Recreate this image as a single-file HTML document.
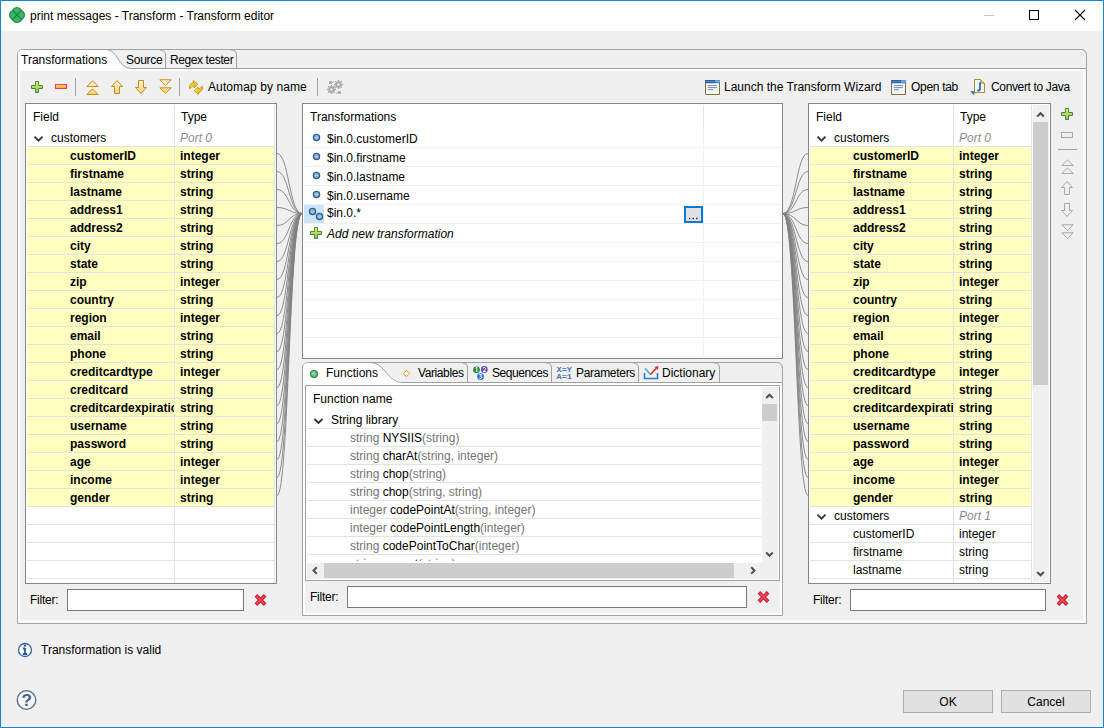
<!DOCTYPE html><html><head><meta charset="utf-8"><style>
html,body{margin:0;padding:0;}
body{width:1104px;height:728px;overflow:hidden;position:relative;background:#f0f0f0;font-family:'Liberation Sans', sans-serif;font-size:12px;color:#000;}
.t{position:absolute;white-space:pre;font-size:12px;line-height:14px;}
.b{font-weight:bold;}
.i{font-style:italic;}
.g{color:#747474;}
svg{position:absolute;left:0;top:0;overflow:visible;}
</style></head><body>
<div style="position:absolute;left:0px;top:0px;width:1104px;height:31px;background:#fff"></div>
<svg width="1104" height="728" style=""><defs><linearGradient id="gp" x1="0" y1="0" x2="0" y2="1"><stop offset="0" stop-color="#eef060"/><stop offset="1" stop-color="#8fc050"/></linearGradient><linearGradient id="gm" x1="0" y1="0" x2="0" y2="1"><stop offset="0" stop-color="#ffe860"/><stop offset="1" stop-color="#f8a040"/></linearGradient><linearGradient id="ga" x1="0" y1="0" x2="0" y2="1"><stop offset="0" stop-color="#fff8e0"/><stop offset="1" stop-color="#f8d070"/></linearGradient><linearGradient id="gg" x1="0" y1="0" x2="1" y2="1"><stop offset="0" stop-color="#fff4b0"/><stop offset="0.5" stop-color="#f4c830"/><stop offset="1" stop-color="#e0a818"/></linearGradient></defs><rect x="0.5" y="0.5" width="1103" height="727" fill="none" stroke="#1883d7"/><g transform="translate(9,7)"><circle cx="8" cy="5.3" r="5.3" fill="#178a3a"/><circle cx="8" cy="10.7" r="5.3" fill="#178a3a"/><circle cx="5.3" cy="8" r="5.3" fill="#178a3a"/><circle cx="10.7" cy="8" r="5.3" fill="#178a3a"/><circle cx="8" cy="5.3" r="4.3" fill="#3cb566"/><circle cx="8" cy="10.7" r="4.3" fill="#3cb566"/><circle cx="5.3" cy="8" r="4.3" fill="#3cb566"/><circle cx="10.7" cy="8" r="4.3" fill="#3cb566"/><path d="M3,3 L13,13 M13,3 L3,13" stroke="#1a843c" stroke-width="1.1"/></g><path d="M984,15.5 H994" stroke="#c8c8c8"/><rect x="1029.5" y="10.5" width="9" height="9" fill="none" stroke="#000"/><path d="M1075,10 L1085,20 M1085,10 L1075,20" stroke="#000" stroke-width="1.1"/></svg>
<div class="t " style="left:30px;top:9px;">print messages - Transform - Transform editor</div>
<svg width="1104" height="728" style=""><path d="M17.5,623.5 V55.5 Q17.5,49.5 23.5,49.5 H1080.5 Q1086.5,49.5 1086.5,55.5 V623.5 Z" fill="#f0f0f0" stroke="#a0a0a0"/><path d="M18,69 V54.5 Q18,50 22.5,50 H106 C118,50 118,68 131,68 V71 H18 Z" fill="#fff"/><path d="M106,49.5 C118,49.5 118,68.5 131,68.5" fill="none" stroke="#a0a0a0"/><path d="M131,68.5 H1086" stroke="#a0a0a0"/><path d="M19,70 H1084.5 V621.5 H19 Z" fill="none" stroke="#fff" stroke-width="2"/><path d="M165.5,68 V55 Q165.5,50 160,50" fill="none" stroke="#a0a0a0"/><path d="M236.5,68 V55 Q236.5,50 231,50" fill="none" stroke="#a0a0a0"/></svg>
<div class="t " style="left:21px;top:53px;">Transformations</div>
<div class="t " style="left:126px;top:53px;letter-spacing:-0.25px">Source</div>
<div class="t " style="left:170px;top:53px;letter-spacing:-0.4px">Regex tester</div>
<svg width="1104" height="728" style=""><g transform="translate(31,81)"><path d="M4.5,0.5 H7.5 V4.5 H11.5 V7.5 H7.5 V11.5 H4.5 V7.5 H0.5 V4.5 H4.5 Z" fill="url(#gp)" stroke="#3a8a48"/></g><rect x="55.5" y="84.5" width="11" height="4" fill="url(#gm)" stroke="#f03a55"/><path d="M75.5,78 V96" stroke="#a0a0a0"/><path d="M179.5,78 V96" stroke="#a0a0a0"/><path d="M317.5,78 V96" stroke="#a0a0a0"/><g transform="translate(86,80)"><path d="M6.5,0.8 L12.2,6.5 H0.8 Z M6.5,8.8 L12.2,14.5 H0.8 Z" fill="url(#ga)" stroke="#c98a1a" stroke-linejoin="round"/></g><g transform="translate(111,80)"><path d="M6,0.5 L11.5,6.5 H8.5 V13.5 H3.5 V6.5 H0.5 Z" fill="url(#ga)" stroke="#c98a1a" stroke-linejoin="round"/></g><g transform="translate(135,80)"><path d="M3.5,0.5 H8.5 V7.5 H11.5 L6,13.5 L0.5,7.5 H3.5 Z" fill="url(#ga)" stroke="#c98a1a" stroke-linejoin="round"/></g><g transform="translate(159,79)"><path d="M0.8,0.8 H12.2 L6.5,6.5 Z M0.8,8.8 H12.2 L6.5,14.5 Z" fill="url(#ga)" stroke="#c98a1a" stroke-linejoin="round"/></g><g transform="translate(189,80)" fill="url(#gg)" stroke="#c89410" stroke-width="0.9" stroke-linejoin="round"><path d="M0.6,9 V5.5 L3,2.8 H4.6 V0.6 L8.8,4.3 L5,8 V6.2 H3.2 Z"/><path d="M13.4,6 V9.5 L11,12.2 H9.4 V14.4 L5.2,10.7 L9,7 V8.8 H10.8 Z"/></g><path d="M336.06,88.87 L336.06,90.13 L334.69,90.33 L334.35,91.17 L335.17,92.27 L334.27,93.17 L333.17,92.35 L332.33,92.69 L332.13,94.06 L330.87,94.06 L330.67,92.69 L329.83,92.35 L328.73,93.17 L327.83,92.27 L328.65,91.17 L328.31,90.33 L326.94,90.13 L326.94,88.87 L328.31,88.67 L328.65,87.83 L327.83,86.73 L328.73,85.83 L329.83,86.65 L330.67,86.31 L330.87,84.94 L332.13,84.94 L332.33,86.31 L333.17,86.65 L334.27,85.83 L335.17,86.73 L334.35,87.83 L334.69,88.67 Z M332.8,89.5 A1.3,1.3 0 1 0 330.2,89.5 A1.3,1.3 0 1 0 332.8,89.5 Z" fill="#a9a9a9" fill-rule="evenodd"/><path d="M343.06,83.87 L343.06,85.13 L341.69,85.33 L341.35,86.17 L342.17,87.27 L341.27,88.17 L340.17,87.35 L339.33,87.69 L339.13,89.06 L337.87,89.06 L337.67,87.69 L336.83,87.35 L335.73,88.17 L334.83,87.27 L335.65,86.17 L335.31,85.33 L333.94,85.13 L333.94,83.87 L335.31,83.67 L335.65,82.83 L334.83,81.73 L335.73,80.83 L336.83,81.65 L337.67,81.31 L337.87,79.94 L339.13,79.94 L339.33,81.31 L340.17,81.65 L341.27,80.83 L342.17,81.73 L341.35,82.83 L341.69,83.67 Z M339.8,84.5 A1.3,1.3 0 1 0 337.2,84.5 A1.3,1.3 0 1 0 339.8,84.5 Z" fill="#a9a9a9" fill-rule="evenodd"/><rect x="329" y="81" width="3" height="3" fill="#b0b0b0"/><path d="M332,83 L334,81" stroke="#b0b0b0"/><rect x="338" y="91" width="3" height="3" fill="#b0b0b0"/><path d="M336,94 L338,92" stroke="#b0b0b0"/><g transform="translate(705,80)"><rect x="0" y="0" width="15" height="15" fill="#eef8fb"/><path d="M0.5,3 V14.5 H14.5 V3" fill="none" stroke="#8a7038"/><rect x="0" y="0" width="15" height="3.2" fill="#2c5c9c"/><rect x="0.5" y="1" width="9" height="1" fill="#4a8ad0"/><rect x="10" y="0.3" width="5" height="2.2" fill="#6cb2ea"/><path d="M3,5.6 H12 M3,7.6 H12 M3,9.6 H8" stroke="#7a88c0"/></g><g transform="translate(891,80)"><rect x="0" y="0" width="15" height="15" fill="#eef8fb"/><path d="M0.5,3 V14.5 H14.5 V3" fill="none" stroke="#8a7038"/><rect x="0" y="0" width="15" height="3.2" fill="#2c5c9c"/><rect x="0.5" y="1" width="9" height="1" fill="#4a8ad0"/><rect x="10" y="0.3" width="5" height="2.2" fill="#6cb2ea"/><path d="M3,5.6 H12 M3,7.6 H12 M3,9.6 H8" stroke="#7a88c0"/></g><g transform="translate(970,79)"><path d="M4.5,0.5 H10.5 L14.5,4.5 V13.5 H4.5 Z" fill="#f2f5fb" stroke="#b08a30"/><path d="M10.5,0.5 L14.5,4.5 H10.5 Z" fill="#e8c070" stroke="#b08a30" stroke-width="0.6"/><path d="M10,3.3 V9.8 Q10,11.6 8.2,11.6 H7.3" fill="none" stroke="#2a64a8" stroke-width="1.7"/><path d="M0.2,12.3 H4.5 L4.3,16.3 Z" fill="#2a64a8"/></g></svg>
<div class="t " style="left:208px;top:80px;letter-spacing:0.1px">Automap by name</div>
<div class="t " style="left:724px;top:80px;">Launch the Transform Wizard</div>
<div class="t " style="left:911px;top:80px;letter-spacing:-0.3px">Open tab</div>
<div class="t " style="left:991px;top:80px;letter-spacing:-0.35px">Convert to Java</div>
<div style="position:absolute;left:25px;top:103px;width:252px;height:481px;background:#fff;box-sizing:border-box;border:1px solid #828790"></div>
<div style="position:absolute;left:27px;top:147px;width:248px;height:17px;background:#ffffc0"></div>
<div style="position:absolute;left:27px;top:165px;width:248px;height:17px;background:#ffffc0"></div>
<div style="position:absolute;left:27px;top:183px;width:248px;height:17px;background:#ffffc0"></div>
<div style="position:absolute;left:27px;top:201px;width:248px;height:17px;background:#ffffc0"></div>
<div style="position:absolute;left:27px;top:219px;width:248px;height:17px;background:#ffffc0"></div>
<div style="position:absolute;left:27px;top:237px;width:248px;height:17px;background:#ffffc0"></div>
<div style="position:absolute;left:27px;top:255px;width:248px;height:17px;background:#ffffc0"></div>
<div style="position:absolute;left:27px;top:273px;width:248px;height:17px;background:#ffffc0"></div>
<div style="position:absolute;left:27px;top:291px;width:248px;height:17px;background:#ffffc0"></div>
<div style="position:absolute;left:27px;top:309px;width:248px;height:17px;background:#ffffc0"></div>
<div style="position:absolute;left:27px;top:327px;width:248px;height:17px;background:#ffffc0"></div>
<div style="position:absolute;left:27px;top:345px;width:248px;height:17px;background:#ffffc0"></div>
<div style="position:absolute;left:27px;top:363px;width:248px;height:17px;background:#ffffc0"></div>
<div style="position:absolute;left:27px;top:381px;width:248px;height:17px;background:#ffffc0"></div>
<div style="position:absolute;left:27px;top:399px;width:248px;height:17px;background:#ffffc0"></div>
<div style="position:absolute;left:27px;top:417px;width:248px;height:17px;background:#ffffc0"></div>
<div style="position:absolute;left:27px;top:435px;width:248px;height:17px;background:#ffffc0"></div>
<div style="position:absolute;left:27px;top:453px;width:248px;height:17px;background:#ffffc0"></div>
<div style="position:absolute;left:27px;top:471px;width:248px;height:17px;background:#ffffc0"></div>
<div style="position:absolute;left:27px;top:489px;width:248px;height:17px;background:#ffffc0"></div>
<svg width="1104" height="728" style=""><path d="M27,146.5 H275" stroke="#e3e3e3"/><path d="M27,164.5 H275" stroke="#e3e3e3"/><path d="M27,182.5 H275" stroke="#e3e3e3"/><path d="M27,200.5 H275" stroke="#e3e3e3"/><path d="M27,218.5 H275" stroke="#e3e3e3"/><path d="M27,236.5 H275" stroke="#e3e3e3"/><path d="M27,254.5 H275" stroke="#e3e3e3"/><path d="M27,272.5 H275" stroke="#e3e3e3"/><path d="M27,290.5 H275" stroke="#e3e3e3"/><path d="M27,308.5 H275" stroke="#e3e3e3"/><path d="M27,326.5 H275" stroke="#e3e3e3"/><path d="M27,344.5 H275" stroke="#e3e3e3"/><path d="M27,362.5 H275" stroke="#e3e3e3"/><path d="M27,380.5 H275" stroke="#e3e3e3"/><path d="M27,398.5 H275" stroke="#e3e3e3"/><path d="M27,416.5 H275" stroke="#e3e3e3"/><path d="M27,434.5 H275" stroke="#e3e3e3"/><path d="M27,452.5 H275" stroke="#e3e3e3"/><path d="M27,470.5 H275" stroke="#e3e3e3"/><path d="M27,488.5 H275" stroke="#e3e3e3"/><path d="M27,506.5 H275" stroke="#e3e3e3"/><path d="M27,524.5 H275" stroke="#e3e3e3"/><path d="M27,542.5 H275" stroke="#e3e3e3"/><path d="M27,560.5 H275" stroke="#e3e3e3"/><path d="M27,578.5 H275" stroke="#e3e3e3"/><path d="M174.5,105 V583" stroke="#e3e3e3"/><path d="M274.5,105 V583" stroke="#e3e3e3"/><rect x="25.5" y="103.5" width="251" height="480" fill="none" stroke="#828790"/></svg>
<div class="t " style="left:33px;top:110px;">Field</div>
<div class="t " style="left:181px;top:110px;">Type</div>
<div style="position:absolute;left:26px;top:104px;width:249px;height:479px;overflow:hidden">
<svg width="20" height="20" style="left:7px;top:31px;position:absolute"><path d="M1.5,1.7 L5.5,5.7 L9.5,1.7" fill="none" stroke="#383838" stroke-width="1.9"/></svg>
<div class="t" style="left:25px;top:27px">customers</div>
<div class="t i" style="left:154px;top:27px;color:#8c8c8c">Port 0</div>
<div class="t b" style="left:44px;top:45px;width:104px;overflow:hidden">customerID</div>
<div class="t b" style="left:154px;top:45px">integer</div>
<div class="t b" style="left:44px;top:63px;width:104px;overflow:hidden">firstname</div>
<div class="t b" style="left:154px;top:63px">string</div>
<div class="t b" style="left:44px;top:81px;width:104px;overflow:hidden">lastname</div>
<div class="t b" style="left:154px;top:81px">string</div>
<div class="t b" style="left:44px;top:99px;width:104px;overflow:hidden">address1</div>
<div class="t b" style="left:154px;top:99px">string</div>
<div class="t b" style="left:44px;top:117px;width:104px;overflow:hidden">address2</div>
<div class="t b" style="left:154px;top:117px">string</div>
<div class="t b" style="left:44px;top:135px;width:104px;overflow:hidden">city</div>
<div class="t b" style="left:154px;top:135px">string</div>
<div class="t b" style="left:44px;top:153px;width:104px;overflow:hidden">state</div>
<div class="t b" style="left:154px;top:153px">string</div>
<div class="t b" style="left:44px;top:171px;width:104px;overflow:hidden">zip</div>
<div class="t b" style="left:154px;top:171px">integer</div>
<div class="t b" style="left:44px;top:189px;width:104px;overflow:hidden">country</div>
<div class="t b" style="left:154px;top:189px">string</div>
<div class="t b" style="left:44px;top:207px;width:104px;overflow:hidden">region</div>
<div class="t b" style="left:154px;top:207px">integer</div>
<div class="t b" style="left:44px;top:225px;width:104px;overflow:hidden">email</div>
<div class="t b" style="left:154px;top:225px">string</div>
<div class="t b" style="left:44px;top:243px;width:104px;overflow:hidden">phone</div>
<div class="t b" style="left:154px;top:243px">string</div>
<div class="t b" style="left:44px;top:261px;width:104px;overflow:hidden">creditcardtype</div>
<div class="t b" style="left:154px;top:261px">integer</div>
<div class="t b" style="left:44px;top:279px;width:104px;overflow:hidden">creditcard</div>
<div class="t b" style="left:154px;top:279px">string</div>
<div class="t b" style="left:44px;top:297px;width:104px;overflow:hidden">creditcardexpiration</div>
<div class="t b" style="left:154px;top:297px">string</div>
<div class="t b" style="left:44px;top:315px;width:104px;overflow:hidden">username</div>
<div class="t b" style="left:154px;top:315px">string</div>
<div class="t b" style="left:44px;top:333px;width:104px;overflow:hidden">password</div>
<div class="t b" style="left:154px;top:333px">string</div>
<div class="t b" style="left:44px;top:351px;width:104px;overflow:hidden">age</div>
<div class="t b" style="left:154px;top:351px">integer</div>
<div class="t b" style="left:44px;top:369px;width:104px;overflow:hidden">income</div>
<div class="t b" style="left:154px;top:369px">integer</div>
<div class="t b" style="left:44px;top:387px;width:104px;overflow:hidden">gender</div>
<div class="t b" style="left:154px;top:387px">string</div>
</div>
<div style="position:absolute;left:808px;top:103px;width:243px;height:481px;background:#fff;box-sizing:border-box;border:1px solid #828790"></div>
<div style="position:absolute;left:810px;top:147px;width:221px;height:17px;background:#ffffc0"></div>
<div style="position:absolute;left:810px;top:165px;width:221px;height:17px;background:#ffffc0"></div>
<div style="position:absolute;left:810px;top:183px;width:221px;height:17px;background:#ffffc0"></div>
<div style="position:absolute;left:810px;top:201px;width:221px;height:17px;background:#ffffc0"></div>
<div style="position:absolute;left:810px;top:219px;width:221px;height:17px;background:#ffffc0"></div>
<div style="position:absolute;left:810px;top:237px;width:221px;height:17px;background:#ffffc0"></div>
<div style="position:absolute;left:810px;top:255px;width:221px;height:17px;background:#ffffc0"></div>
<div style="position:absolute;left:810px;top:273px;width:221px;height:17px;background:#ffffc0"></div>
<div style="position:absolute;left:810px;top:291px;width:221px;height:17px;background:#ffffc0"></div>
<div style="position:absolute;left:810px;top:309px;width:221px;height:17px;background:#ffffc0"></div>
<div style="position:absolute;left:810px;top:327px;width:221px;height:17px;background:#ffffc0"></div>
<div style="position:absolute;left:810px;top:345px;width:221px;height:17px;background:#ffffc0"></div>
<div style="position:absolute;left:810px;top:363px;width:221px;height:17px;background:#ffffc0"></div>
<div style="position:absolute;left:810px;top:381px;width:221px;height:17px;background:#ffffc0"></div>
<div style="position:absolute;left:810px;top:399px;width:221px;height:17px;background:#ffffc0"></div>
<div style="position:absolute;left:810px;top:417px;width:221px;height:17px;background:#ffffc0"></div>
<div style="position:absolute;left:810px;top:435px;width:221px;height:17px;background:#ffffc0"></div>
<div style="position:absolute;left:810px;top:453px;width:221px;height:17px;background:#ffffc0"></div>
<div style="position:absolute;left:810px;top:471px;width:221px;height:17px;background:#ffffc0"></div>
<div style="position:absolute;left:810px;top:489px;width:221px;height:17px;background:#ffffc0"></div>
<svg width="1104" height="728" style=""><path d="M810,146.5 H1031" stroke="#e3e3e3"/><path d="M810,164.5 H1031" stroke="#e3e3e3"/><path d="M810,182.5 H1031" stroke="#e3e3e3"/><path d="M810,200.5 H1031" stroke="#e3e3e3"/><path d="M810,218.5 H1031" stroke="#e3e3e3"/><path d="M810,236.5 H1031" stroke="#e3e3e3"/><path d="M810,254.5 H1031" stroke="#e3e3e3"/><path d="M810,272.5 H1031" stroke="#e3e3e3"/><path d="M810,290.5 H1031" stroke="#e3e3e3"/><path d="M810,308.5 H1031" stroke="#e3e3e3"/><path d="M810,326.5 H1031" stroke="#e3e3e3"/><path d="M810,344.5 H1031" stroke="#e3e3e3"/><path d="M810,362.5 H1031" stroke="#e3e3e3"/><path d="M810,380.5 H1031" stroke="#e3e3e3"/><path d="M810,398.5 H1031" stroke="#e3e3e3"/><path d="M810,416.5 H1031" stroke="#e3e3e3"/><path d="M810,434.5 H1031" stroke="#e3e3e3"/><path d="M810,452.5 H1031" stroke="#e3e3e3"/><path d="M810,470.5 H1031" stroke="#e3e3e3"/><path d="M810,488.5 H1031" stroke="#e3e3e3"/><path d="M810,506.5 H1031" stroke="#e3e3e3"/><path d="M810,524.5 H1031" stroke="#e3e3e3"/><path d="M810,542.5 H1031" stroke="#e3e3e3"/><path d="M810,560.5 H1031" stroke="#e3e3e3"/><path d="M810,578.5 H1031" stroke="#e3e3e3"/><path d="M953.5,105 V583" stroke="#e3e3e3"/><path d="M1031.5,105 V583" stroke="#e3e3e3"/><rect x="808.5" y="103.5" width="242" height="480" fill="none" stroke="#828790"/></svg>
<div class="t " style="left:816px;top:110px;">Field</div>
<div class="t " style="left:960px;top:110px;">Type</div>
<div style="position:absolute;left:809px;top:104px;width:222px;height:479px;overflow:hidden">
<svg width="20" height="20" style="left:7px;top:31px;position:absolute"><path d="M1.5,1.7 L5.5,5.7 L9.5,1.7" fill="none" stroke="#383838" stroke-width="1.9"/></svg>
<div class="t" style="left:25px;top:27px">customers</div>
<div class="t i" style="left:150px;top:27px;color:#8c8c8c">Port 0</div>
<div class="t b" style="left:44px;top:45px;width:100px;overflow:hidden">customerID</div>
<div class="t b" style="left:150px;top:45px">integer</div>
<div class="t b" style="left:44px;top:63px;width:100px;overflow:hidden">firstname</div>
<div class="t b" style="left:150px;top:63px">string</div>
<div class="t b" style="left:44px;top:81px;width:100px;overflow:hidden">lastname</div>
<div class="t b" style="left:150px;top:81px">string</div>
<div class="t b" style="left:44px;top:99px;width:100px;overflow:hidden">address1</div>
<div class="t b" style="left:150px;top:99px">string</div>
<div class="t b" style="left:44px;top:117px;width:100px;overflow:hidden">address2</div>
<div class="t b" style="left:150px;top:117px">string</div>
<div class="t b" style="left:44px;top:135px;width:100px;overflow:hidden">city</div>
<div class="t b" style="left:150px;top:135px">string</div>
<div class="t b" style="left:44px;top:153px;width:100px;overflow:hidden">state</div>
<div class="t b" style="left:150px;top:153px">string</div>
<div class="t b" style="left:44px;top:171px;width:100px;overflow:hidden">zip</div>
<div class="t b" style="left:150px;top:171px">integer</div>
<div class="t b" style="left:44px;top:189px;width:100px;overflow:hidden">country</div>
<div class="t b" style="left:150px;top:189px">string</div>
<div class="t b" style="left:44px;top:207px;width:100px;overflow:hidden">region</div>
<div class="t b" style="left:150px;top:207px">integer</div>
<div class="t b" style="left:44px;top:225px;width:100px;overflow:hidden">email</div>
<div class="t b" style="left:150px;top:225px">string</div>
<div class="t b" style="left:44px;top:243px;width:100px;overflow:hidden">phone</div>
<div class="t b" style="left:150px;top:243px">string</div>
<div class="t b" style="left:44px;top:261px;width:100px;overflow:hidden">creditcardtype</div>
<div class="t b" style="left:150px;top:261px">integer</div>
<div class="t b" style="left:44px;top:279px;width:100px;overflow:hidden">creditcard</div>
<div class="t b" style="left:150px;top:279px">string</div>
<div class="t b" style="left:44px;top:297px;width:100px;overflow:hidden">creditcardexpiration</div>
<div class="t b" style="left:150px;top:297px">string</div>
<div class="t b" style="left:44px;top:315px;width:100px;overflow:hidden">username</div>
<div class="t b" style="left:150px;top:315px">string</div>
<div class="t b" style="left:44px;top:333px;width:100px;overflow:hidden">password</div>
<div class="t b" style="left:150px;top:333px">string</div>
<div class="t b" style="left:44px;top:351px;width:100px;overflow:hidden">age</div>
<div class="t b" style="left:150px;top:351px">integer</div>
<div class="t b" style="left:44px;top:369px;width:100px;overflow:hidden">income</div>
<div class="t b" style="left:150px;top:369px">integer</div>
<div class="t b" style="left:44px;top:387px;width:100px;overflow:hidden">gender</div>
<div class="t b" style="left:150px;top:387px">string</div>
<svg width="20" height="20" style="left:7px;top:409px;position:absolute"><path d="M1.5,1.7 L5.5,5.7 L9.5,1.7" fill="none" stroke="#383838" stroke-width="1.9"/></svg>
<div class="t" style="left:25px;top:405px">customers</div>
<div class="t i" style="left:150px;top:405px;color:#8c8c8c">Port 1</div>
<div class="t " style="left:44px;top:423px;width:100px;overflow:hidden">customerID</div>
<div class="t " style="left:150px;top:423px">integer</div>
<div class="t " style="left:44px;top:441px;width:100px;overflow:hidden">firstname</div>
<div class="t " style="left:150px;top:441px">string</div>
<div class="t " style="left:44px;top:459px;width:100px;overflow:hidden">lastname</div>
<div class="t " style="left:150px;top:459px">string</div>
<div class="t " style="left:44px;top:477px;width:100px;overflow:hidden">address1</div>
<div class="t " style="left:150px;top:477px">string</div>
</div>
<div style="position:absolute;left:1033px;top:105px;width:16px;height:477px;background:#f0f0f0"></div>
<div style="position:absolute;left:1033px;top:122px;width:15px;height:263px;background:#cdcdcd"></div>
<svg width="1104" height="728" style=""><path d="M1037.2,116.5 L1040.5,113.2 L1043.8,116.5" fill="none" stroke="#505050" stroke-width="2"/><path d="M1037.2,572 L1040.5,575.3 L1043.8,572" fill="none" stroke="#505050" stroke-width="2"/></svg>
<svg width="1104" height="728" style=""><g transform="translate(1061,108)"><path d="M4.5,0.5 H7.5 V4.5 H11.5 V7.5 H7.5 V11.5 H4.5 V7.5 H0.5 V4.5 H4.5 Z" fill="url(#gp)" stroke="#3a8a48"/></g><rect x="1061.5" y="132.5" width="11" height="5" fill="none" stroke="#a8a8a8"/><path d="M1058,149.5 H1077" stroke="#a0a0a0"/><g transform="translate(1061,159)"><path d="M6.5,0.8 L12.2,6.5 H0.8 Z M6.5,8.8 L12.2,14.5 H0.8 Z" fill="#f0f0f0" stroke="#a8a8a8" stroke-linejoin="round"/></g><g transform="translate(1061,181)"><path d="M6,0.5 L11.5,6.5 H8.5 V13.5 H3.5 V6.5 H0.5 Z" fill="#f0f0f0" stroke="#a8a8a8" stroke-linejoin="round"/></g><g transform="translate(1061,203)"><path d="M3.5,0.5 H8.5 V7.5 H11.5 L6,13.5 L0.5,7.5 H3.5 Z" fill="#f0f0f0" stroke="#a8a8a8" stroke-linejoin="round"/></g><g transform="translate(1061,224)"><path d="M0.8,0.8 H12.2 L6.5,6.5 Z M0.8,8.8 H12.2 L6.5,14.5 Z" fill="#f0f0f0" stroke="#a8a8a8" stroke-linejoin="round"/></g></svg>
<div style="position:absolute;left:302px;top:103px;width:481px;height:256px;background:#fff;box-sizing:border-box;border:1px solid #828790"></div>
<svg width="1104" height="728" style=""><path d="M304,147.5 H781" stroke="#f0f0f0"/><path d="M304,166.5 H781" stroke="#f0f0f0"/><path d="M304,185.5 H781" stroke="#f0f0f0"/><path d="M304,204.5 H781" stroke="#f0f0f0"/><path d="M304,223.5 H781" stroke="#f0f0f0"/><path d="M304,242.5 H781" stroke="#f0f0f0"/><path d="M304,261.5 H781" stroke="#f0f0f0"/><path d="M304,280.5 H781" stroke="#f0f0f0"/><path d="M304,299.5 H781" stroke="#f0f0f0"/><path d="M304,318.5 H781" stroke="#f0f0f0"/><path d="M304,337.5 H781" stroke="#f0f0f0"/><path d="M304,356.5 H781" stroke="#f0f0f0"/><path d="M703.5,105 V128" stroke="#e5e5e5"/><path d="M703.5,128 V357" stroke="#eaf2fa"/><rect x="304" y="205" width="20" height="18" fill="#cce4f7"/><circle cx="316.5" cy="137.5" r="3.1" fill="#8cb6dc" stroke="#2f5f8c" stroke-width="1.3"/><path d="M315.0,137.5 H318.0" stroke="#b8d4ec" stroke-width="0.8"/><circle cx="316.5" cy="156.5" r="3.1" fill="#8cb6dc" stroke="#2f5f8c" stroke-width="1.3"/><path d="M315.0,156.5 H318.0" stroke="#b8d4ec" stroke-width="0.8"/><circle cx="316.5" cy="175.5" r="3.1" fill="#8cb6dc" stroke="#2f5f8c" stroke-width="1.3"/><path d="M315.0,175.5 H318.0" stroke="#b8d4ec" stroke-width="0.8"/><circle cx="316.5" cy="194.5" r="3.1" fill="#8cb6dc" stroke="#2f5f8c" stroke-width="1.3"/><path d="M315.0,194.5 H318.0" stroke="#b8d4ec" stroke-width="0.8"/><circle cx="312.5" cy="211.5" r="3.1" fill="#8cb6dc" stroke="#2f5f8c" stroke-width="1.3"/><path d="M311.0,211.5 H314.0" stroke="#b8d4ec" stroke-width="0.8"/><circle cx="319.5" cy="216.5" r="3.1" fill="#8cb6dc" stroke="#2f5f8c" stroke-width="1.3"/><path d="M318.0,216.5 H321.0" stroke="#b8d4ec" stroke-width="0.8"/><g transform="translate(310,227)"><path d="M4.5,0.5 H7.5 V4.5 H11.5 V7.5 H7.5 V11.5 H4.5 V7.5 H0.5 V4.5 H4.5 Z" fill="url(#gp)" stroke="#3a8a48"/></g><rect x="685" y="207" width="17" height="15" fill="#e1e1e1" stroke="#0078d7" stroke-width="2"/><path d="M689,218.5 h1.2 M692.6,218.5 h1.2 M696.2,218.5 h1.2" stroke="#000" stroke-width="1.5"/><rect x="302.5" y="103.5" width="480" height="255" fill="none" stroke="#828790"/></svg>
<div class="t " style="left:310px;top:110px;">Transformations</div>
<div class="t " style="left:327px;top:132px;">$in.0.customerID</div>
<div class="t " style="left:327px;top:151px;">$in.0.firstname</div>
<div class="t " style="left:327px;top:170px;">$in.0.lastname</div>
<div class="t " style="left:327px;top:189px;">$in.0.username</div>
<div class="t " style="left:327px;top:206px;">$in.0.*</div>
<div class="t i" style="left:327px;top:227px;">Add new transformation</div>
<svg width="1104" height="728" style=""><path d="M302.5,615.5 V368.5 Q302.5,362.5 308.5,362.5 H776.5 Q782.5,362.5 782.5,368.5 V615.5 Z" fill="#f0f0f0" stroke="#a0a0a0"/><path d="M303,382 V367.5 Q303,363 307.5,363 H371 C384,363 388,381 402,381 V384 H303 Z" fill="#fff"/><path d="M371,362.5 C384,362.5 388,382.5 402,382.5" fill="none" stroke="#a0a0a0"/><path d="M402,382.5 H782" stroke="#a0a0a0"/><path d="M304,384 H781 V614 H304 Z" fill="none" stroke="#fff" stroke-width="2"/><path d="M467.5,382 V368 Q467.5,363 462.5,363" fill="none" stroke="#a0a0a0"/><path d="M551.5,382 V368 Q551.5,363 546.5,363" fill="none" stroke="#a0a0a0"/><path d="M638.5,382 V368 Q638.5,363 633.5,363" fill="none" stroke="#a0a0a0"/><path d="M719.5,382 V368 Q719.5,363 714.5,363" fill="none" stroke="#a0a0a0"/><defs><radialGradient id="gd" cx="0.45" cy="0.45" r="0.6"><stop offset="0" stop-color="#a8dcb0"/><stop offset="1" stop-color="#4aa060"/></radialGradient></defs><circle cx="314" cy="374" r="3.5" fill="url(#gd)" stroke="#2a8a47" stroke-width="1.1"/><path d="M406.5,370.3 L409.7,373.5 L406.5,376.7 L403.3,373.5 Z" fill="#fffbe8" stroke="#d4a020" stroke-width="1"/><circle cx="476.5" cy="369.8" r="3.4" fill="#2a8a40"/><circle cx="484.3" cy="369.5" r="3.4" fill="#6a50b0"/><circle cx="480.5" cy="376.6" r="3.4" fill="#2a78d0"/><path d="M475.7,368 L476.8,367.3 V372" stroke="#fff" stroke-width="1" fill="none"/><path d="M483,368 Q484.5,366.8 485.6,368.2 Q485.6,369.2 483.2,371.5 H485.8" stroke="#fff" stroke-width="0.9" fill="none"/><path d="M479.2,374.6 H481.6 L480.3,376.3 Q482,376.5 481.7,377.8 Q481,379 479.2,378.4" stroke="#fff" stroke-width="0.9" fill="none"/><text x="556.5" y="371.8" textLength="15.5" lengthAdjust="spacingAndGlyphs" font-family="Liberation Mono" font-size="7.5" font-weight="bold" fill="#4a7ab8">X=Y</text><text x="556.5" y="379" textLength="15.5" lengthAdjust="spacingAndGlyphs" font-family="Liberation Mono" font-size="7.5" font-weight="bold" fill="#4a7ab8">A=1</text><path d="M644.5,373 V378.5 H657.5 V373" fill="none" stroke="#2f78d0" stroke-width="1.6"/><path d="M645,368.5 L650.5,374.5" fill="none" stroke="#48aee8" stroke-width="1.6"/><path d="M650.5,374.5 L656,368.5" fill="none" stroke="#d02a2a" stroke-width="1.6"/><path d="M654.5,367 L658.5,366 L657.8,370 Z" fill="#d02a2a"/></svg>
<div class="t " style="left:326px;top:366px;">Functions</div>
<div class="t " style="left:418px;top:366px;letter-spacing:-0.4px">Variables</div>
<div class="t " style="left:492px;top:366px;letter-spacing:-0.45px">Sequences</div>
<div class="t " style="left:576px;top:366px;letter-spacing:-0.3px">Parameters</div>
<div class="t " style="left:662px;top:366px;">Dictionary</div>
<div style="position:absolute;left:305px;top:385px;width:475px;height:196px;background:#fff;box-sizing:border-box;border:1px solid #a2a4ac"></div>
<svg width="1104" height="728" style=""><path d="M307,428.5 H761" stroke="#e3e3e3"/><path d="M307,446.5 H761" stroke="#e3e3e3"/><path d="M307,464.5 H761" stroke="#e3e3e3"/><path d="M307,482.5 H761" stroke="#e3e3e3"/><path d="M307,500.5 H761" stroke="#e3e3e3"/><path d="M307,518.5 H761" stroke="#e3e3e3"/><path d="M307,536.5 H761" stroke="#e3e3e3"/><path d="M307,554.5 H761" stroke="#e3e3e3"/><path d="M314.5,419.0 L318.5,423.0 L322.5,419.0" fill="none" stroke="#383838" stroke-width="1.9"/><rect x="305.5" y="385.5" width="474" height="195" fill="none" stroke="#a2a4ac"/></svg>
<div class="t " style="left:313px;top:392px;">Function name</div>
<div class="t " style="left:331px;top:413px;">String library</div>
<div style="position:absolute;left:306px;top:386px;width:456px;height:175px;overflow:hidden">
<div class="t" style="left:44px;top:45px"><span class="g">string </span>NYSIIS<span class="g">(string)</span></div>
<div class="t" style="left:44px;top:63px"><span class="g">string </span>charAt<span class="g">(string, integer)</span></div>
<div class="t" style="left:44px;top:81px"><span class="g">string </span>chop<span class="g">(string)</span></div>
<div class="t" style="left:44px;top:99px"><span class="g">string </span>chop<span class="g">(string, string)</span></div>
<div class="t" style="left:44px;top:117px"><span class="g">integer </span>codePointAt<span class="g">(string, integer)</span></div>
<div class="t" style="left:44px;top:135px"><span class="g">integer </span>codePointLength<span class="g">(integer)</span></div>
<div class="t" style="left:44px;top:153px"><span class="g">string </span>codePointToChar<span class="g">(integer)</span></div>
<div class="t" style="left:44px;top:171px"><span class="g">string </span>concat<span class="g">(string)</span></div>
</div>
<div style="position:absolute;left:762px;top:387px;width:16px;height:192px;background:#f0f0f0"></div>
<div style="position:absolute;left:762px;top:404px;width:15px;height:17px;background:#cdcdcd"></div>
<div style="position:absolute;left:307px;top:563px;width:471px;height:16px;background:#f0f0f0"></div>
<div style="position:absolute;left:324px;top:563px;width:410px;height:15px;background:#cdcdcd"></div>
<svg width="1104" height="728" style=""><path d="M766.2,398 L769.5,394.7 L772.8,398" fill="none" stroke="#505050" stroke-width="2"/><path d="M766.2,552.5 L769.5,555.8 L772.8,552.5" fill="none" stroke="#505050" stroke-width="2"/><path d="M316.8,567.2 L313.5,570.5 L316.8,573.8" fill="none" stroke="#505050" stroke-width="2"/><path d="M751.2,567.2 L754.5,570.5 L751.2,573.8" fill="none" stroke="#505050" stroke-width="2"/></svg>
<div class="t " style="left:30px;top:593px;letter-spacing:-0.25px">Filter:</div>
<div style="position:absolute;left:67px;top:589px;width:177px;height:22px;background:#fff;box-sizing:border-box;border:1px solid #7a7a7a"></div>
<div class="t " style="left:310px;top:590px;letter-spacing:-0.25px">Filter:</div>
<div style="position:absolute;left:347px;top:586px;width:400px;height:22px;background:#fff;box-sizing:border-box;border:1px solid #7a7a7a"></div>
<div class="t " style="left:813px;top:593px;letter-spacing:-0.25px">Filter:</div>
<div style="position:absolute;left:850px;top:589px;width:196px;height:22px;background:#fff;box-sizing:border-box;border:1px solid #7a7a7a"></div>
<svg width="1104" height="728" style=""><g transform="translate(254,593.5)"><path d="M1.9,1.9 L11.1,11.1 M11.1,1.9 L1.9,11.1" stroke="#c8182a" stroke-width="3.7"/><path d="M2.6,2.6 L10.4,10.4 M10.4,2.6 L2.6,10.4" stroke="#f0485a" stroke-width="2.0"/></g><g transform="translate(757,590.5)"><path d="M1.9,1.9 L11.1,11.1 M11.1,1.9 L1.9,11.1" stroke="#c8182a" stroke-width="3.7"/><path d="M2.6,2.6 L10.4,10.4 M10.4,2.6 L2.6,10.4" stroke="#f0485a" stroke-width="2.0"/></g><g transform="translate(1056,593.5)"><path d="M1.9,1.9 L11.1,11.1 M11.1,1.9 L1.9,11.1" stroke="#c8182a" stroke-width="3.7"/><path d="M2.6,2.6 L10.4,10.4 M10.4,2.6 L2.6,10.4" stroke="#f0485a" stroke-width="2.0"/></g></svg>
<svg width="1104" height="728" style=""><path d="M277,153.5 C289,153.5 289,213.5 302,213.5" fill="none" stroke="#808080" stroke-width="0.9"/><path d="M783,213.5 C796,213.5 796,153.5 808,153.5" fill="none" stroke="#808080" stroke-width="0.9"/><path d="M277,171.5 C289,171.5 289,213.5 302,213.5" fill="none" stroke="#808080" stroke-width="0.9"/><path d="M783,213.5 C796,213.5 796,171.5 808,171.5" fill="none" stroke="#808080" stroke-width="0.9"/><path d="M277,189.5 C289,189.5 289,213.5 302,213.5" fill="none" stroke="#808080" stroke-width="0.9"/><path d="M783,213.5 C796,213.5 796,189.5 808,189.5" fill="none" stroke="#808080" stroke-width="0.9"/><path d="M277,207.5 C289,207.5 289,213.5 302,213.5" fill="none" stroke="#808080" stroke-width="0.9"/><path d="M783,213.5 C796,213.5 796,207.5 808,207.5" fill="none" stroke="#808080" stroke-width="0.9"/><path d="M277,225.5 C289,225.5 289,213.5 302,213.5" fill="none" stroke="#808080" stroke-width="0.9"/><path d="M783,213.5 C796,213.5 796,225.5 808,225.5" fill="none" stroke="#808080" stroke-width="0.9"/><path d="M277,243.5 C289,243.5 289,213.5 302,213.5" fill="none" stroke="#808080" stroke-width="0.9"/><path d="M783,213.5 C796,213.5 796,243.5 808,243.5" fill="none" stroke="#808080" stroke-width="0.9"/><path d="M277,261.5 C289,261.5 289,213.5 302,213.5" fill="none" stroke="#808080" stroke-width="0.9"/><path d="M783,213.5 C796,213.5 796,261.5 808,261.5" fill="none" stroke="#808080" stroke-width="0.9"/><path d="M277,279.5 C289,279.5 289,213.5 302,213.5" fill="none" stroke="#808080" stroke-width="0.9"/><path d="M783,213.5 C796,213.5 796,279.5 808,279.5" fill="none" stroke="#808080" stroke-width="0.9"/><path d="M277,297.5 C289,297.5 289,213.5 302,213.5" fill="none" stroke="#808080" stroke-width="0.9"/><path d="M783,213.5 C796,213.5 796,297.5 808,297.5" fill="none" stroke="#808080" stroke-width="0.9"/><path d="M277,315.5 C289,315.5 289,213.5 302,213.5" fill="none" stroke="#808080" stroke-width="0.9"/><path d="M783,213.5 C796,213.5 796,315.5 808,315.5" fill="none" stroke="#808080" stroke-width="0.9"/><path d="M277,333.5 C289,333.5 289,213.5 302,213.5" fill="none" stroke="#808080" stroke-width="0.9"/><path d="M783,213.5 C796,213.5 796,333.5 808,333.5" fill="none" stroke="#808080" stroke-width="0.9"/><path d="M277,351.5 C289,351.5 289,213.5 302,213.5" fill="none" stroke="#808080" stroke-width="0.9"/><path d="M783,213.5 C796,213.5 796,351.5 808,351.5" fill="none" stroke="#808080" stroke-width="0.9"/><path d="M277,369.5 C289,369.5 289,213.5 302,213.5" fill="none" stroke="#808080" stroke-width="0.9"/><path d="M783,213.5 C796,213.5 796,369.5 808,369.5" fill="none" stroke="#808080" stroke-width="0.9"/><path d="M277,387.5 C289,387.5 289,213.5 302,213.5" fill="none" stroke="#808080" stroke-width="0.9"/><path d="M783,213.5 C796,213.5 796,387.5 808,387.5" fill="none" stroke="#808080" stroke-width="0.9"/><path d="M277,405.5 C289,405.5 289,213.5 302,213.5" fill="none" stroke="#808080" stroke-width="0.9"/><path d="M783,213.5 C796,213.5 796,405.5 808,405.5" fill="none" stroke="#808080" stroke-width="0.9"/><path d="M277,423.5 C289,423.5 289,213.5 302,213.5" fill="none" stroke="#808080" stroke-width="0.9"/><path d="M783,213.5 C796,213.5 796,423.5 808,423.5" fill="none" stroke="#808080" stroke-width="0.9"/><path d="M277,441.5 C289,441.5 289,213.5 302,213.5" fill="none" stroke="#808080" stroke-width="0.9"/><path d="M783,213.5 C796,213.5 796,441.5 808,441.5" fill="none" stroke="#808080" stroke-width="0.9"/><path d="M277,459.5 C289,459.5 289,213.5 302,213.5" fill="none" stroke="#808080" stroke-width="0.9"/><path d="M783,213.5 C796,213.5 796,459.5 808,459.5" fill="none" stroke="#808080" stroke-width="0.9"/><path d="M277,477.5 C289,477.5 289,213.5 302,213.5" fill="none" stroke="#808080" stroke-width="0.9"/><path d="M783,213.5 C796,213.5 796,477.5 808,477.5" fill="none" stroke="#808080" stroke-width="0.9"/><path d="M277,495.5 C289,495.5 289,213.5 302,213.5" fill="none" stroke="#808080" stroke-width="0.9"/><path d="M783,213.5 C796,213.5 796,495.5 808,495.5" fill="none" stroke="#808080" stroke-width="0.9"/></svg>
<svg width="1104" height="728" style=""><circle cx="25" cy="650" r="6.5" fill="#fff" stroke="#2a64a8" stroke-width="1.3"/><path d="M25,648 V654.5 M22.8,654 H27.2 M23,648.5 H25" stroke="#1f5aa0" stroke-width="1.8"/><circle cx="25" cy="645.6" r="1.2" fill="#1f5aa0"/><circle cx="26.5" cy="700" r="9.3" fill="#f2f4f6" stroke="#5a6e90" stroke-width="1.3"/><text x="26.8" y="706.3" text-anchor="middle" font-family="Liberation Sans" font-weight="bold" font-size="17" fill="#4a6088">?</text></svg>
<div class="t " style="left:41px;top:643px;">Transformation is valid</div>
<div style="position:absolute;left:903px;top:690px;width:90px;height:23px;background:#e1e1e1;box-sizing:border-box;border:1px solid #adadad"></div>
<div style="position:absolute;left:1001px;top:690px;width:90px;height:23px;background:#e1e1e1;box-sizing:border-box;border:1px solid #adadad"></div>
<div class="t" style="left:903px;top:695px;width:90px;text-align:center">OK</div>
<div class="t" style="left:1001px;top:695px;width:90px;text-align:center">Cancel</div>
</body></html>
